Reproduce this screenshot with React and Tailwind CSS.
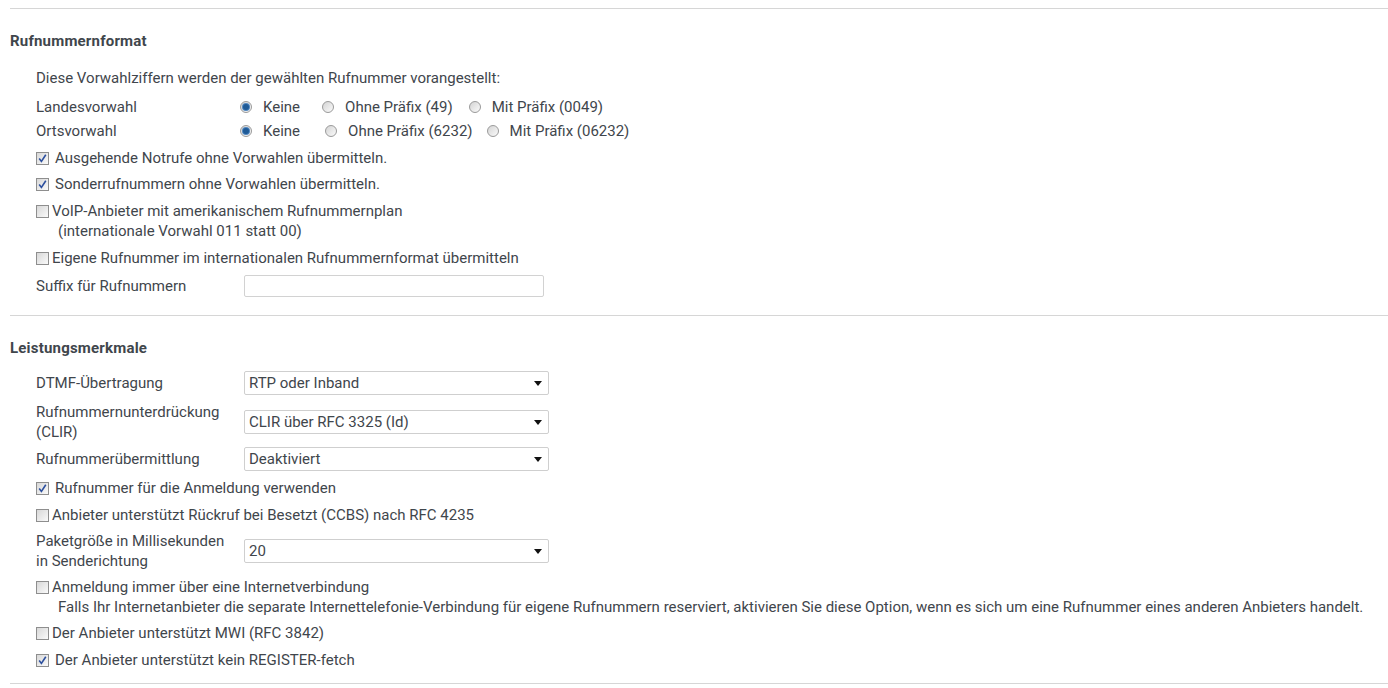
import React from "react";

function Checkbox({ checked }) {
  return (
    <span className="relative inline-block w-[13px] h-[13px] shrink-0 border border-[#8e8e8e] bg-gradient-to-br from-[#d8d8d8] to-[#fafafa]">
      {checked && (
        <svg viewBox="0 0 11 11" className="absolute inset-0 w-[11px] h-[11px]">
          <path d="M2.2 5.6 L4.4 8.4 L8.8 1.8" fill="none" stroke="#2c4f9e" strokeWidth="1.6" />
        </svg>
      )}
    </span>
  );
}

function Radio({ checked }) {
  return (
    <span className="relative inline-flex items-center justify-center w-[12px] h-[12px] shrink-0 rounded-full border border-[#9a9a9a] bg-gradient-to-br from-[#d4d4d4] to-[#fbfbfb]">
      {checked && <span className="w-[6px] h-[6px] rounded-full bg-[#1f5a96] shadow-[0_0_0_1px_#4f86c0]" />}
    </span>
  );
}

function RadioOption({ checked, label, gapAfter = "" }) {
  return (
    <span className={"flex items-center " + gapAfter}>
      <Radio checked={checked} />
      <span className="ml-[11px]">{label}</span>
    </span>
  );
}

function CheckRow({ checked, children, sub, className = "" }) {
  return (
    <div className={"pl-[26px] " + className}>
      <div className="flex items-center h-[20px]">
        <Checkbox checked={checked} />
        <span className={checked ? "ml-[6px]" : "ml-[3px]"}>{children}</span>
      </div>
      {sub && <div className="pl-[22px] leading-[21px]">{sub}</div>}
    </div>
  );
}

function Select({ value }) {
  return (
    <div className="flex items-center justify-between w-[305px] h-[24px] border border-[#cfcfcf] rounded-[2px] bg-white pl-[4px] pr-[6px]">
      <span>{value}</span>
      <svg viewBox="0 0 8 5" className="w-[8px] h-[5px]">
        <path d="M0 0 H8 L4 5 Z" fill="#111" />
      </svg>
    </div>
  );
}

function FieldRow({ label, children, className = "" }) {
  return (
    <div className={"pl-[26px] flex items-center " + className}>
      <div className="w-[208px] shrink-0 leading-[20px]">{label}</div>
      {children}
    </div>
  );
}

export default function App() {
  return (
    <div className="w-[1388px] h-[688px] bg-white text-[15px] leading-[20px] text-[#3f464c] font-['Roboto','Liberation_Sans',sans-serif] overflow-hidden">
      <div className="pl-[10px] pt-[8px]">
        <div className="border-t border-[#d6d6d6]" />

        {/* Rufnummernformat */}
        <h2 className="mt-[22px] font-bold tracking-[0.2px]">Rufnummernformat</h2>
        <div className="mt-[17px] pl-[26px]">Diese Vorwahlziffern werden der gewählten Rufnummer vorangestellt:</div>

        <div className="mt-[9px] pl-[26px] flex items-center h-[20px]">
          <div className="w-[204px] shrink-0">Landesvorwahl</div>
          <RadioOption checked label="Keine" gapAfter="mr-[22px]" />
          <RadioOption label="Ohne Präfix (49)" gapAfter="mr-[16px]" />
          <RadioOption label="Mit Präfix (0049)" />
        </div>
        <div className="mt-[4px] pl-[26px] flex items-center h-[20px]">
          <div className="w-[204px] shrink-0">Ortsvorwahl</div>
          <RadioOption checked label="Keine" gapAfter="mr-[25px]" />
          <RadioOption label="Ohne Präfix (6232)" gapAfter="mr-[14px]" />
          <RadioOption label="Mit Präfix (06232)" />
        </div>

        <CheckRow checked className="mt-[7px]">Ausgehende Notrufe ohne Vorwahlen übermitteln.</CheckRow>
        <CheckRow checked className="mt-[6px]">Sonderrufnummern ohne Vorwahlen übermitteln.</CheckRow>
        <CheckRow className="mt-[7px]" sub="(internationale Vorwahl 011 statt 00)">
          VoIP-Anbieter mit amerikanischem Rufnummernplan
        </CheckRow>
        <CheckRow className="mt-[6px]">Eigene Rufnummer im internationalen Rufnummernformat übermitteln</CheckRow>

        <FieldRow label="Suffix für Rufnummern" className="mt-[7px]">
          <input type="text" className="w-[300px] h-[22px] border border-[#d2d2d2] rounded-[2px] bg-white outline-none" />
        </FieldRow>

        <div className="mt-[18px] border-t border-[#d6d6d6]" />

        {/* Leistungsmerkmale */}
        <h2 className="mt-[22px] font-bold tracking-[0.2px]">Leistungsmerkmale</h2>

        <FieldRow label="DTMF-Übertragung" className="mt-[13px]">
          <Select value="RTP oder Inband" />
        </FieldRow>
        <FieldRow
          label={
            <>
              Rufnummernunterdrückung
              <br />
              (CLIR)
            </>
          }
          className="mt-[7px]"
        >
          <Select value="CLIR über RFC 3325 (Id)" />
        </FieldRow>
        <FieldRow label="Rufnummerübermittlung" className="mt-[5px]">
          <Select value="Deaktiviert" />
        </FieldRow>

        <CheckRow checked className="mt-[7px]">Rufnummer für die Anmeldung verwenden</CheckRow>
        <CheckRow className="mt-[7px]">Anbieter unterstützt Rückruf bei Besetzt (CCBS) nach RFC 4235</CheckRow>

        <FieldRow
          label={
            <>
              Paketgröße in Millisekunden
              <br />
              in Senderichtung
            </>
          }
          className="mt-[6px]"
        >
          <Select value="20" />
        </FieldRow>

        <CheckRow
          className="mt-[6px]"
          sub="Falls Ihr Internetanbieter die separate Internettelefonie-Verbindung für eigene Rufnummern reserviert, aktivieren Sie diese Option, wenn es sich um eine Rufnummer eines anderen Anbieters handelt."
        >
          Anmeldung immer über eine Internetverbindung
        </CheckRow>
        <CheckRow className="mt-[5px]">Der Anbieter unterstützt MWI (RFC 3842)</CheckRow>
        <CheckRow checked className="mt-[7px]">Der Anbieter unterstützt kein REGISTER-fetch</CheckRow>

        <div className="mt-[13px] border-t border-[#d6d6d6]" />
      </div>
    </div>
  );
}
